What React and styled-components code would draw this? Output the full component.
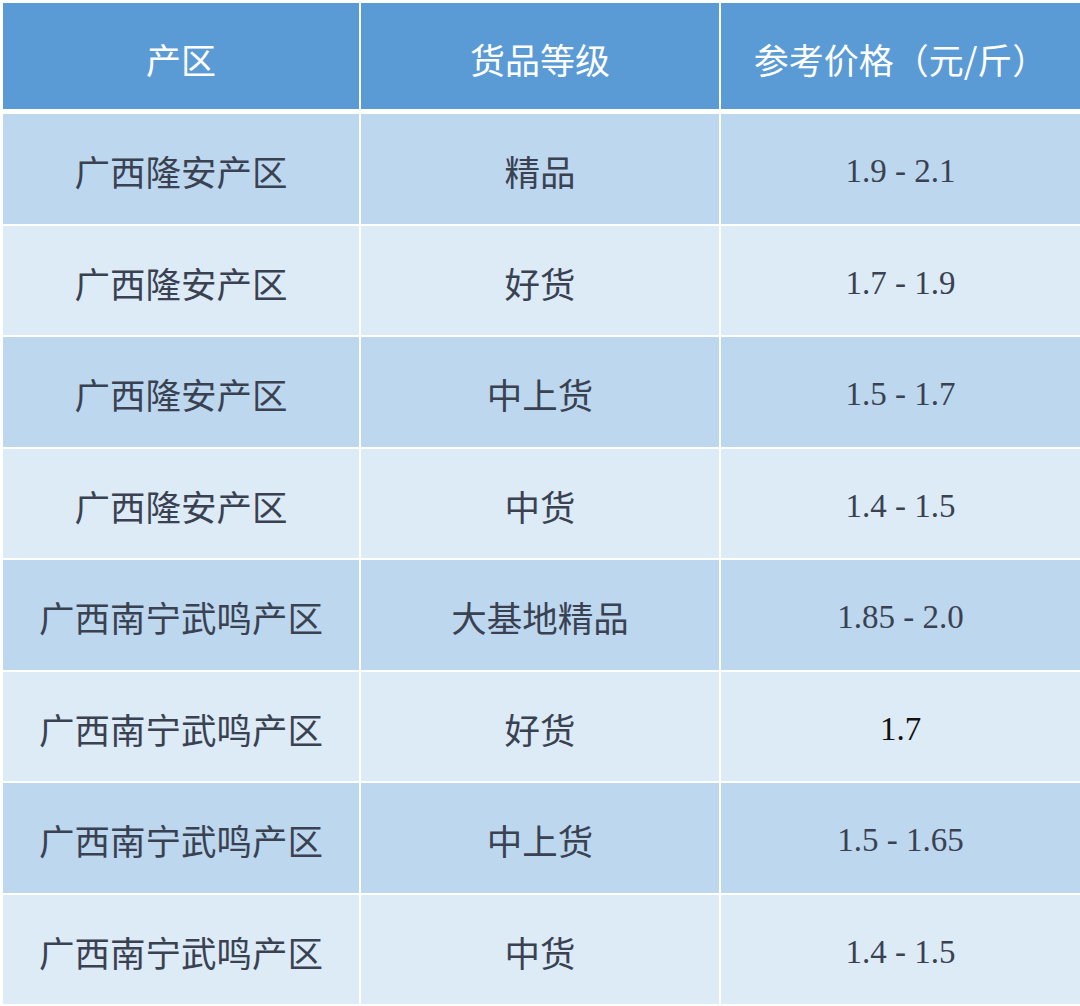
import React from 'react';
import styled, { createGlobalStyle } from 'styled-components';

const GlobalStyle = createGlobalStyle`
	html, body {
		margin: 0;
		padding: 0;
		background: #fff;
	}
`;

const Page = styled.div`
	width: 1080px;
	height: 1006px;
	padding: 3px 0 0 3px;
	box-sizing: border-box;
	background: #fff;
	overflow: hidden;
`;

const Table = styled.div`
	display: flex;
	flex-direction: column;
	gap: 2px;
`;

const Row = styled.div`
	display: grid;
	grid-template-columns: 356px 358px 1fr;
	column-gap: 2px;
	height: ${(p) => (p.$head ? '106px' : '109.5px')};
	margin-bottom: ${(p) => (p.$head ? '3px' : '0')};
`;

const HeadCell = styled.div`
	display: flex;
	align-items: center;
	justify-content: center;
	background: #5b9bd5;
	color: #fff;
	font-family: 'Noto Sans CJK SC', sans-serif;
	font-size: 35px;
	padding-top: 4px;
	box-sizing: border-box;
`;

const Cell = styled.div`
	display: flex;
	align-items: center;
	justify-content: center;
	background: ${(p) => (p.$shade ? '#bdd7ee' : '#ddebf7')};
	color: ${(p) => (p.$black ? '#111' : '#3a4252')};
	font-family: ${(p) =>
		p.$num
			? "'Liberation Serif', 'Noto Sans CJK SC', serif"
			: "'Noto Sans CJK SC', sans-serif"};
	font-size: ${(p) => (p.$num ? '33px' : '35.5px')};
	padding-top: ${(p) => (p.$num ? '6px' : '4px')};
	box-sizing: border-box;
`;

const rows = [
	['广西隆安产区', '精品', '1.9 - 2.1'],
	['广西隆安产区', '好货', '1.7 - 1.9'],
	['广西隆安产区', '中上货', '1.5 - 1.7'],
	['广西隆安产区', '中货', '1.4 - 1.5'],
	['广西南宁武鸣产区', '大基地精品', '1.85 - 2.0'],
	['广西南宁武鸣产区', '好货', '1.7'],
	['广西南宁武鸣产区', '中上货', '1.5 - 1.65'],
	['广西南宁武鸣产区', '中货', '1.4 - 1.5'],
];

const App = () => (
	<Page>
		<GlobalStyle />
		<Table>
			<Row $head>
				<HeadCell>产区</HeadCell>
				<HeadCell>货品等级</HeadCell>
				<HeadCell>参考价格（元/斤）</HeadCell>
			</Row>
			{rows.map((r, i) => (
				<Row key={i}>
					<Cell $shade={i % 2 === 0}>{r[0]}</Cell>
					<Cell $shade={i % 2 === 0}>{r[1]}</Cell>
					<Cell $shade={i % 2 === 0} $num $black={r[2] === '1.7'}>
						{r[2]}
					</Cell>
				</Row>
			))}
		</Table>
	</Page>
);

export default App;
